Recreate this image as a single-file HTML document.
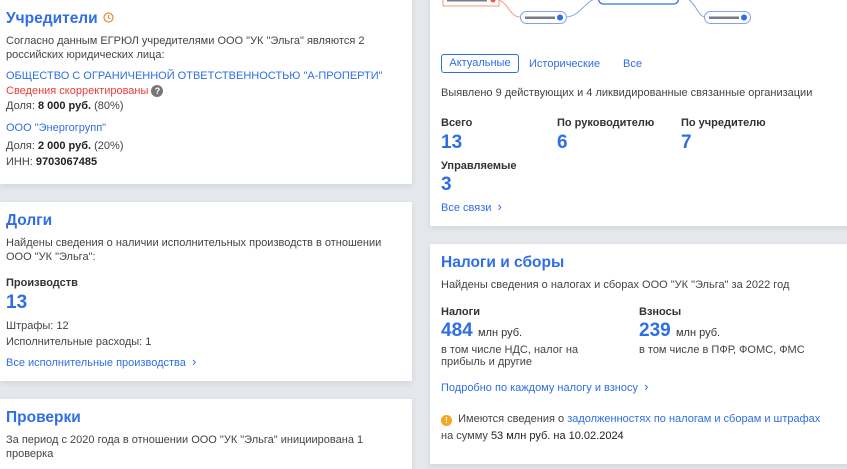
<!DOCTYPE html>
<html><head><meta charset="utf-8"><style>
*{margin:0;padding:0;box-sizing:border-box}
body{width:847px;height:454px;overflow:hidden;background:#e4e7eb;font-family:"Liberation Sans","Noto Sans CJK SC",sans-serif;color:#444;font-size:11px;position:relative}
.card{position:absolute;background:#fff;box-shadow:0 2px 6px rgba(0,0,0,.08)}
.t{position:absolute;white-space:nowrap;line-height:14px}
h2{position:absolute;font-size:15.5px;color:#2f6ee6;font-weight:bold;white-space:nowrap;line-height:20px}
.b{color:#222;font-weight:bold}
.lbl{color:#333;font-weight:bold}
.num{position:absolute;font-size:19px;font-weight:bold;color:#2f6ee6;line-height:22px}
.a{color:#2f6ee6}
.red{color:#ee3b3b}
.ch{font-size:13px}
</style></head><body>
<div class="card" style="left:0;top:-10px;width:412px;height:194px"></div>
<h2 style="left:6px;top:9px">Учредители <svg width="11" height="11" style="vertical-align:0px;margin-left:1px"><circle cx="5.5" cy="5.5" r="4.5" fill="none" stroke="#e8883a" stroke-width="1.2"/><path d="M5.5 3v2.7l1.8 1.2" fill="none" stroke="#e8883a" stroke-width="1.1"/></svg></h2>
<div class="t" style="left:6px;top:34px">Согласно данным ЕГРЮЛ учредителями ООО "УК "Эльга" являются 2<br>российских юридических лица:</div>
<div class="t a" style="left:6px;top:69px">ОБЩЕСТВО С ОГРАНИЧЕННОЙ ОТВЕТСТВЕННОСТЬЮ "А-ПРОПЕРТИ"</div>
<div class="t red" style="left:6px;top:84px">Сведения скорректированы <span style="display:inline-block;width:12px;height:12px;border-radius:50%;background:#777;color:#fff;font-size:9px;text-align:center;line-height:12px;font-weight:bold">?</span></div>
<div class="t" style="left:6px;top:99px">Доля: <span class="b">8 000 руб.</span> (80%)</div>
<div class="t a" style="left:6px;top:121px">ООО "Энергогрупп"</div>
<div class="t" style="left:6px;top:139px">Доля: <span class="b">2 000 руб.</span> (20%)</div>
<div class="t" style="left:6px;top:155px">ИНН: <span class="b">9703067485</span></div>

<div class="card" style="left:0;top:202px;width:412px;height:179px"></div>
<h2 style="left:6px;top:211px">Долги</h2>
<div class="t" style="left:6px;top:236px">Найдены сведения о наличии исполнительных производств в отношении<br>ООО "УК "Эльга":</div>
<div class="t lbl" style="left:6px;top:276px">Производств</div>
<div class="num" style="left:6px;top:292px">13</div>
<div class="t" style="left:6px;top:319px">Штрафы: 12</div>
<div class="t" style="left:6px;top:335px">Исполнительные расходы: 1</div>
<div class="t a" style="left:6px;top:355px">Все исполнительные производства &nbsp;<span class="ch">›</span></div>

<div class="card" style="left:0;top:399px;width:412px;height:70px"></div>
<h2 style="left:6px;top:408px">Проверки</h2>
<div class="t" style="left:6px;top:433px">За период с 2020 года в отношении ООО "УК "Эльга" инициирована 1<br>проверка</div>

<div class="card" style="left:430px;top:-10px;width:430px;height:236px"></div>
<svg style="position:absolute;left:430px;top:0" width="340" height="30">
<path d="M68 0 C78 2 80 17 90 17" fill="none" stroke="#f29a85" stroke-width="1"/>
<rect x="13" y="-6" width="56" height="12" fill="#fff" stroke="#f29a85"/>
<rect x="17" y="-1" width="40" height="2.5" fill="#7a7a88"/>
<circle cx="63" cy="0" r="2.5" fill="#f05a3a"/>
<path d="M136 17 C150 17 155 0 168 -2 M255 -2 C265 0 268 17 275 17" fill="none" stroke="#7fa3ef"/>
<rect x="90.5" y="11.5" width="46" height="12" rx="6" fill="#fff" stroke="#7fa3ef"/>
<rect x="95" y="16.5" width="30" height="2.5" fill="#7a7a88"/><circle cx="130" cy="17.5" r="3" fill="#2f6ee6"/>
<rect x="168.5" y="-10" width="80" height="14" rx="5" fill="#fff" stroke="#2f6ee6" stroke-width="1.3"/>
<rect x="274.5" y="11.5" width="46" height="12" rx="6" fill="#fff" stroke="#7fa3ef"/>
<rect x="279" y="16.5" width="30" height="2.5" fill="#7a7a88"/><circle cx="314" cy="17.5" r="3" fill="#2f6ee6"/>
</svg>
<div class="t a" style="left:441px;top:54px;width:78px;height:19px;border:1px solid #2f6ee6;border-radius:3px;text-align:center;line-height:17px">Актуальные</div>
<div class="t a" style="left:529px;top:57px">Исторические</div>
<div class="t a" style="left:623px;top:57px">Все</div>
<div class="t" style="left:441px;top:86px">Выявлено 9 действующих и 4 ликвидированные связанные организации</div>
<div class="t lbl" style="left:441px;top:116px">Всего</div>
<div class="t lbl" style="left:557px;top:116px">По руководителю</div>
<div class="t lbl" style="left:681px;top:116px">По учредителю</div>
<div class="num" style="left:441px;top:132px">13</div>
<div class="num" style="left:557px;top:132px">6</div>
<div class="num" style="left:681px;top:132px">7</div>
<div class="t lbl" style="left:441px;top:159px">Управляемые</div>
<div class="num" style="left:441px;top:174px">3</div>
<div class="t a" style="left:441px;top:200px">Все связи &nbsp;<span class="ch">›</span></div>

<div class="card" style="left:430px;top:244px;width:430px;height:220px"></div>
<h2 style="left:441px;top:253px">Налоги и сборы</h2>
<div class="t" style="left:441px;top:278px">Найдены сведения о налогах и сборах ООО "УК "Эльга" за 2022 год</div>
<div class="t lbl" style="left:441px;top:305px">Налоги</div>
<div class="t lbl" style="left:639px;top:305px">Взносы</div>
<div class="num" style="left:441px;top:320px">484 <span style="font-size:11px;font-weight:normal;color:#333">млн руб.</span></div>
<div class="num" style="left:639px;top:320px">239 <span style="font-size:11px;font-weight:normal;color:#333">млн руб.</span></div>
<div class="t" style="left:441px;top:344px;line-height:12px">в том числе НДС, налог на<br>прибыль и другие</div>
<div class="t" style="left:639px;top:344px;line-height:12px">в том числе в ПФР, ФОМС, ФМС</div>
<div class="t a" style="left:441px;top:380px">Подробно по каждому налогу и взносу &nbsp;<span class="ch">›</span></div>
<div class="t" style="left:441px;top:412px"><span style="display:inline-block;width:11px;height:11px;border-radius:50%;background:#f5a623;color:#fff;font-size:8px;text-align:center;line-height:11px;font-weight:bold;vertical-align:-1px">!</span>&nbsp; Имеются сведения о <span class="a">задолженностях по налогам и сборам и штрафах</span></div>
<div class="t" style="left:441px;top:429px">на сумму <span style="color:#222">53 млн руб. на 10.02.2024</span></div>
</body></html>
